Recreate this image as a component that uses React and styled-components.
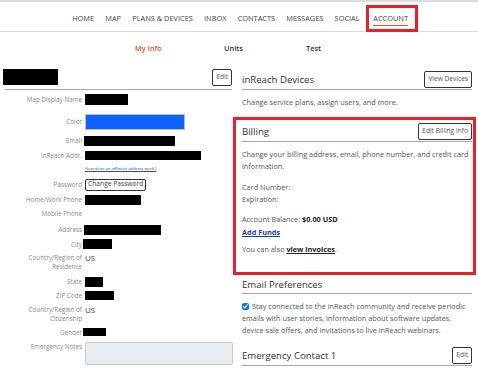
import styled, { createGlobalStyle } from "styled-components";

const GlobalStyle = createGlobalStyle`
  html, body {
    margin: 0;
    padding: 0;
    background: #fff;
    font-family: "Open Sans", "Noto Sans", sans-serif;
    color: #555;
  }
  * { box-sizing: border-box; }
`;

const navItems = ["HOME", "MAP", "PLANS & DEVICES", "INBOX", "CONTACTS", "MESSAGES", "SOCIAL", "ACCOUNT"];

function App() {
  return (
    <>
      <GlobalStyle />
      <Page>
        <NavBar>
          {navItems.map((item) => (
            <NavItem key={item} $active={item === "ACCOUNT"}>
              <span>{item}</span>
            </NavItem>
          ))}
        </NavBar>
        <Tabs>
          <Tab $active $w={89}>My Info</Tab>
          <Tab $w={82}>Units</Tab>
          <Tab>Test</Tab>
        </Tabs>
        <Columns>
          <LeftCol>
            <LeftHeader>
              <Redacted $w={55} $h={16} />
              <SmallButton>Edit</SmallButton>
            </LeftHeader>
            <Fields>
              <Row $h={13} $mt={1}>
                <Label>Map Display Name</Label>
                <Redacted $w={43} $h={11} />
              </Row>
              <Row $h={17} $mt={7}>
                <Label>Color</Label>
                <ColorBox />
              </Row>
              <Row $h={13} $mt={4}>
                <Label>Email</Label>
                <Redacted $w={91} $h={10} $ml={-1} />
              </Row>
              <Row $h={11} $mt={3}>
                <Label>inReach Addr.</Label>
                <Redacted $w={116} $h={9} />
              </Row>
              <Row $h={8} $mt={3}>
                <span />
                <TinyLink href="#">How does an inReach address work?</TinyLink>
              </Row>
              <Row $h={13} $mt={6}>
                <Label>Password</Label>
                <SmallButton $big>Change Password</SmallButton>
              </Row>
              <Row $h={11} $mt={3}>
                <Label>Home/Work Phone</Label>
                <Redacted $w={56} $h={10} />
              </Row>
              <Row $h={11} $mt={3}>
                <Label>Mobile Phone</Label>
              </Row>
              <Row $h={11} $mt={5}>
                <Label>Address</Label>
                <Redacted $w={77} $h={10} $ml={-1} />
              </Row>
              <Row $h={12} $mt={3}>
                <Label>City</Label>
                <Redacted $w={29} $h={10} $ml={-2} />
              </Row>
              <Row $h={18} $mt={3} $top>
                <Label>Country/Region of Residence</Label>
                <Value>US</Value>
              </Row>
              <Row $h={11} $mt={5}>
                <Label>State</Label>
                <Redacted $w={18} $h={10} />
              </Row>
              <Row $h={11} $mt={3}>
                <Label>ZIP Code</Label>
                <Redacted $w={29} $h={9} />
              </Row>
              <Row $h={18} $mt={4} $top>
                <Label>Country/Region of Citizenship</Label>
                <Value>US</Value>
              </Row>
              <Row $h={10} $mt={4}>
                <Label>Gender</Label>
                <Redacted $w={23} $h={8} $ml={-2} />
              </Row>
              <Row $h={23} $mt={5} $top>
                <Label>Emergency Notes</Label>
                <Notes />
              </Row>
            </Fields>
          </LeftCol>
          <RightCol>
            <Section>
              <SectionHead>
                <Heading>inReach Devices</Heading>
                <SmallButton>View Devices</SmallButton>
              </SectionHead>
              <Text $mt={6}>Change service plans, assign users, and more.</Text>
            </Section>
            <BillingBox>
              <SectionHead>
                <Heading>Billing</Heading>
                <SmallButton>Edit Billing Info</SmallButton>
              </SectionHead>
              <Text $mt={6}>
                Change your billing address, email, phone number, and credit card information.
              </Text>
              <Text $mt={9}>Card Number:</Text>
              <Text>Expiration:</Text>
              <Text $mt={8}>
                Account Balance: <strong>$0.00 USD</strong>
              </Text>
              <Text $mt={1}>
                <AddFunds href="#">Add Funds</AddFunds>
              </Text>
              <Text $mt={5}>
                You can also <DarkLink href="#">view invoices</DarkLink>.
              </Text>
            </BillingBox>
            <Section>
              <SectionHead $plain>
                <Heading>Email Preferences</Heading>
              </SectionHead>
              <Text $mt={6}>
                <Check type="checkbox" defaultChecked readOnly />
                Stay connected to the inReach community and receive periodic emails with user
                stories, information about software updates, device sale offers, and invitations
                to live inReach webinars.
              </Text>
            </Section>
            <Section $mt={9}>
              <SectionHead>
                <Heading>Emergency Contact 1</Heading>
                <SmallButton>Edit</SmallButton>
              </SectionHead>
            </Section>
          </RightCol>
        </Columns>
      </Page>
    </>
  );
}

const Page = styled.div`
  width: 478px;
  height: 370px;
  overflow: hidden;
  border-top: 2px solid #ddd;
`;

const NavBar = styled.nav`
  display: flex;
  justify-content: flex-end;
  align-items: stretch;
  height: 30px;
  padding: 3px 60px 0 0;
  border-bottom: 1px solid #ddd;
`;

const NavItem = styled.div`
  display: flex;
  align-items: center;
  padding: ${(p) => (p.$active ? "0 7px 0 4px" : "0 5.6px")};
  border: ${(p) => (p.$active ? "3px solid #e8202a" : "none")};
  margin-bottom: ${(p) => (p.$active ? "-1px" : "0")};
  margin-left: ${(p) => (p.$active ? "1px" : "0")};
  font-size: 7.4px;
  color: #444;
  span {
    display: inline-block;
    padding: 2px 0;
    border-bottom: 1px solid ${(p) => (p.$active ? "#e8532e" : "transparent")};
  }
`;

const Tabs = styled.div`
  display: flex;
  padding: 11px 0 0 135px;
  height: 34px;
`;

const Tab = styled.div`
  width: ${(p) => (p.$w ? `${p.$w}px` : "auto")};
  font-size: 7.4px;
  font-weight: 600;
  color: ${(p) => (p.$active ? "#e0532e" : "#333")};
`;

const Columns = styled.div`
  display: grid;
  grid-template-columns: 238px 230px;
  column-gap: 4px;
`;

const LeftCol = styled.div`
  padding: 3px 6px 0 3px;
`;

const LeftHeader = styled.div`
  display: flex;
  justify-content: space-between;
  align-items: flex-start;
  padding-bottom: 3px;
  margin-left: 2px;
  border-bottom: 1px solid #aaa;
  & > div:first-child {
    margin-left: -2px;
  }
`;

const Fields = styled.div`
  display: flex;
  flex-direction: column;
  padding-top: 2px;
`;

const Row = styled.div`
  display: grid;
  grid-template-columns: 79px 1fr;
  column-gap: 3px;
  justify-items: start;
  align-items: ${(p) => (p.$top ? "start" : "center")};
  height: ${(p) => p.$h}px;
  margin-top: ${(p) => p.$mt || 0}px;
`;

const Label = styled.div`
  justify-self: end;
  text-align: right;
  font-size: 6.3px;
  line-height: 9px;
  color: #8a8a8a;
`;

const Value = styled.div`
  font-size: 8px;
  line-height: 10px;
  color: #444;
`;

const Redacted = styled.div`
  width: ${(p) => p.$w}px;
  height: ${(p) => p.$h}px;
  background: #000;
  margin-left: ${(p) => p.$ml || 0}px;
`;

const ColorBox = styled.div`
  width: 100px;
  height: 16px;
  background: #0f62fe;
  border: 1px solid #bbb;
`;

const TinyLink = styled.a`
  font-size: 4.2px;
  color: #2a4f8a;
  text-decoration: underline;
  white-space: nowrap;
`;

const Notes = styled.div`
  width: 148px;
  height: 23px;
  background: #e9ecef;
  border: 1px solid #ccc;
  border-radius: 2px;
`;

const SmallButton = styled.button`
  font-family: "Open Sans", "Noto Sans", sans-serif;
  font-size: ${(p) => (p.$big ? "6.7px" : "6.6px")};
  color: ${(p) => (p.$big ? "#444" : "#555")};
  background: #fff;
  border: 1px solid #333;
  border-radius: 2px;
  padding: ${(p) => (p.$big ? "0 2px" : "3px 3px")};
  height: ${(p) => (p.$big ? "12px" : "17px")};
  line-height: 1;
  white-space: nowrap;
  cursor: pointer;
`;

const RightCol = styled.div`
  padding-top: 3px;
  display: flex;
  flex-direction: column;
`;

const Section = styled.div`
  margin-top: ${(p) => p.$mt || 0}px;
`;

const SectionHead = styled.div`
  display: flex;
  justify-content: space-between;
  align-items: center;
  min-height: 21px;
  border-bottom: 1px solid #aaa;
  ${(p) => p.$plain && "min-height: 18px;"}
`;

const Heading = styled.h3`
  margin: 0;
  font-size: 9.6px;
  font-weight: 400;
  color: #333;
`;

const Text = styled.p`
  margin: ${(p) => p.$mt || 0}px 0 0;
  font-size: 7.3px;
  line-height: 12px;
  color: #555;
  strong {
    color: #222;
  }
`;

const BillingBox = styled.div`
  margin: 9px -4px 1px -9px;
  padding: 1px 1px 14px 6px;
  border: 3px solid #e8202a;
  height: 158px;
`;

const AddFunds = styled.a`
  font-weight: 700;
  color: #1d3f8a;
  text-decoration: underline;
`;

const DarkLink = styled.a`
  font-weight: 700;
  color: #222;
  text-decoration: underline;
`;

const Check = styled.input`
  width: 7px;
  height: 7px;
  margin: 0 3px 0 0;
  vertical-align: -1px;
`;

export default App;
